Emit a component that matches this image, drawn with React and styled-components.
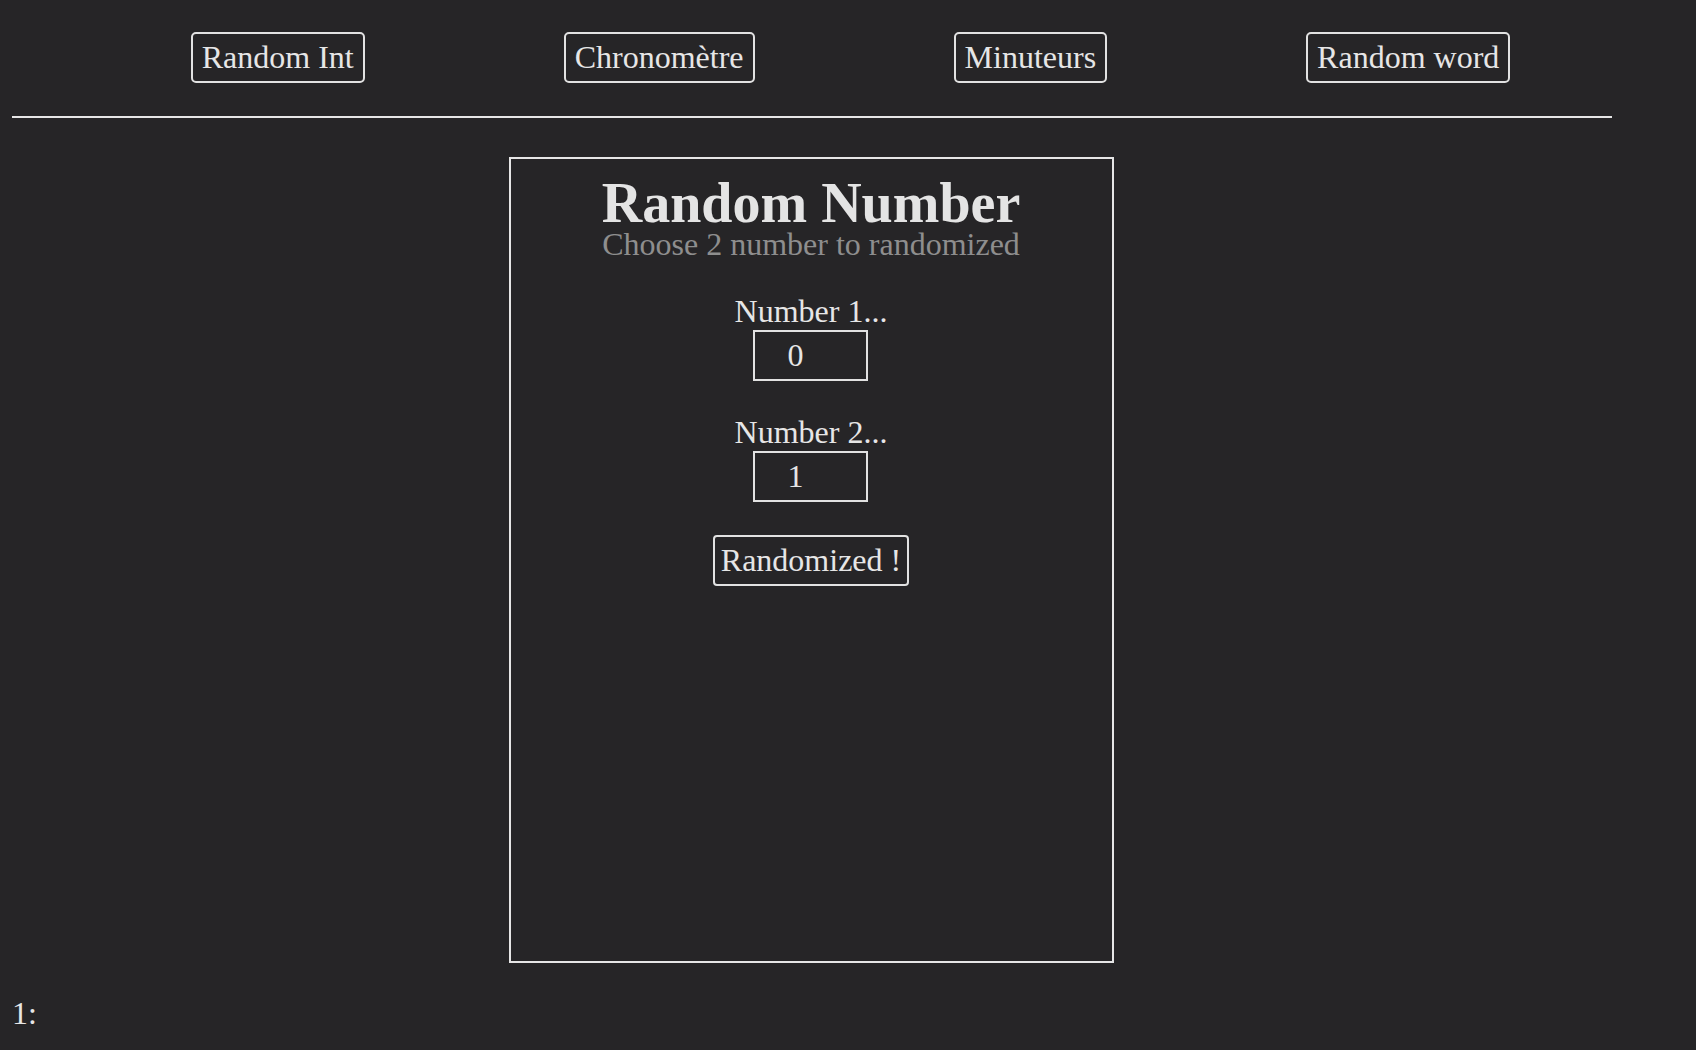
import React from 'react';
import styled, { createGlobalStyle } from 'styled-components';

const GlobalStyle = createGlobalStyle`
    html, body {
        margin: 0;
        padding: 0;
        background: #262527;
    }
    body {
        color: #e6e6e6;
        font-family: "Liberation Serif", "Times New Roman", serif;
        font-size: 32px;
        line-height: 1.15;
    }
`

const Page = styled.div`
    display: flex;
    flex-direction: column;
    min-height: 1050px;
`

const Nav = styled.nav`
    display: flex;
    justify-content: center;
    gap: 199px;
    padding: 32px 0 0 5px;
`

const NavButton = styled.button`
    font: inherit;
    line-height: 37px;
    color: #e6e6e6;
    background: transparent;
    border: 2px solid #e2e2e2;
    border-radius: 5px;
    padding: 5px 9px;
    cursor: pointer;
`

const Divider = styled.hr`
    width: 1600px;
    margin: 33px 0 0 12px;
    border: none;
    height: 2px;
    background: #e6e6e6;
`

const Main = styled.main`
    width: 1600px;
    margin-left: 12px;
    padding-top: 39px;
    display: flex;
    justify-content: center;
`

const Card = styled.section`
    box-sizing: border-box;
    width: 605px;
    height: 806px;
    margin-left: -2px;
    border: 2px solid #e6e6e6;
    padding-top: 19px;
    display: flex;
    flex-direction: column;
    align-items: center;
`

const Title = styled.h1`
    margin: 0;
    font-size: 56px;
    line-height: 50px;
    font-weight: bold;
    color: #e4e4e4;
`

const Subtitle = styled.p`
    margin: 0;
    font-size: 32px;
    line-height: 32px;
    color: #8e8e8e;
`

const Form = styled.div`
    display: flex;
    flex-direction: column;
    align-items: center;
    gap: 33px;
    margin-top: 33px;
`

const Field = styled.label`
    display: flex;
    flex-direction: column;
    align-items: center;
`

const NumberInput = styled.input`
    box-sizing: border-box;
    width: 115px;
    height: 51px;
    padding: 0 0 0 32px;
    font: inherit;
    color: #e6e6e6;
    background: transparent;
    border: 2px solid #e2e2e2;
    border-radius: 0;
    outline: none;
    &::-webkit-inner-spin-button,
    &::-webkit-outer-spin-button {
        -webkit-appearance: none;
        margin: 0;
    }
    -moz-appearance: textfield;
`

const SubmitButton = styled(NavButton)`
    padding: 5px 6px;
    border-radius: 4px;
`

const Result = styled.div`
    margin: 32px 0 0 12px;
`

const navItems = ['Random Int', 'Chronomètre', 'Minuteurs', 'Random word'];

export default function App() {
    const [first, setFirst] = React.useState(0);
    const [second, setSecond] = React.useState(1);

    return (
        <Page>
            <GlobalStyle />
            <Nav>
                {navItems.map(item => <NavButton key={item}>{item}</NavButton>)}
            </Nav>
            <Divider />
            <Main>
                <Card>
                    <Title>Random Number</Title>
                    <Subtitle>Choose 2 number to randomized</Subtitle>
                    <Form>
                        <Field>
                            Number 1...
                            <NumberInput type="number" value={first} onChange={e => setFirst(e.target.value)} />
                        </Field>
                        <Field>
                            Number 2...
                            <NumberInput type="number" value={second} onChange={e => setSecond(e.target.value)} />
                        </Field>
                        <SubmitButton>Randomized !</SubmitButton>
                    </Form>
                </Card>
            </Main>
            <Result>1:</Result>
        </Page>
    );
}
